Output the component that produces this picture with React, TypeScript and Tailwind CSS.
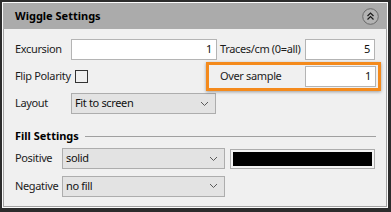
import React from "react";

const font = { fontFamily: '"Noto Sans", "Open Sans", sans-serif' };

function Chevron() {
  return (
    <svg width="9" height="6" viewBox="0 0 9 6" className="shrink-0">
      <polyline points="1,1 4.5,4.5 8,1" fill="none" stroke="#5a5a5a" strokeWidth="1" />
    </svg>
  );
}

function Select({ value, w }: { value: string; w: string }) {
  return (
    <div className={`${w} h-[21px] flex items-center justify-between border border-[#adadad] bg-[#e3e3e3] pl-[3px] pr-[6px] text-[11px] text-[#111]`}>
      <span>{value}</span>
      <Chevron />
    </div>
  );
}

function Input({ value, w }: { value: string; w: string }) {
  return (
    <div className={`${w} h-[21px] flex items-center justify-end border border-[#b4b4b4] bg-white pr-[4px] text-[11px] text-[#111]`}>
      {value}
    </div>
  );
}

export default function App() {
  return (
    <div style={font} className="relative w-[391px] h-[212px] border-t-2 border-l-2 border-r-[3px] border-b-[4px] border-[#2c2c2c] bg-[#fbfbfb] p-px tracking-[-0.35px]">
      <div className="flex flex-col h-full">
        <div className="h-[26px] shrink-0 bg-[#ababab] flex items-center justify-between pl-[12px] pr-[8px]">
          <span className="text-[11px] font-bold text-black tracking-normal">Wiggle Settings</span>
          <svg width="17" height="17" viewBox="0 0 17 17">
            <circle cx="8.5" cy="8.5" r="7.8" fill="#b3b3b3" stroke="#6a6a6a" strokeWidth="1" />
            <polyline points="5.5,8 8.5,5 11.5,8" fill="none" stroke="#1a1a1a" strokeWidth="1.2" />
            <polyline points="5.5,11.5 8.5,8.5 11.5,11.5" fill="none" stroke="#1a1a1a" strokeWidth="1.2" />
          </svg>
        </div>
        <div className="flex-1 border-x border-b border-[#a3a3a3] bg-[#f0f0f0] pl-[11px] pt-[10px] text-[11px] text-[#1c1c1c]">
          <div className="grid grid-cols-[56px_146px_3px_85px_70px] grid-rows-[21px_21px_21px] gap-y-[6px] items-center">
            <span>Excursion</span>
            <Input value="1" w="w-[146px]" />
            <span />
            <span className="whitespace-nowrap">Traces/cm (0=all)</span>
            <Input value="5" w="w-[70px]" />

            <span className="whitespace-nowrap">Flip Polarity</span>
            <div className="pl-[4px] flex items-center">
              <div className="w-[13px] h-[13px] border border-[#333]" />
            </div>
            <span />
            <span>Over sample</span>
            <Input value="1" w="w-[71px]" />

            <span>Layout</span>
            <Select value="Fit to screen" w="w-[145px]" />
          </div>

          <div className="mt-[15px] h-[14px] flex items-center pr-[10px]">
            <span className="text-[11px] font-bold text-black whitespace-nowrap tracking-normal">Fill Settings</span>
            <div className="ml-[6px] flex-1 h-px bg-[#a0a0a0]" />
          </div>

          <div className="mt-[5px] grid grid-cols-[47px_163px_5px_145px] grid-rows-[21px_22px] gap-y-[6px] items-center">
            <span>Positive</span>
            <Select value="solid" w="w-[163px]" />
            <span />
            <div className="w-[145px] h-[20px] border border-[#adadad] bg-[#f4f4f4] p-[2px]">
              <div className="w-full h-full bg-black" />
            </div>

            <span>Negative</span>
            <Select value="no fill" w="w-[163px]" />
          </div>
        </div>
      </div>
      <div className="absolute left-[204px] top-[60px] w-[175px] h-[29px] border-[3px] border-[#f48a1c] shadow-[0_1px_3px_rgba(0,0,0,0.35)]" />
    </div>
  );
}
